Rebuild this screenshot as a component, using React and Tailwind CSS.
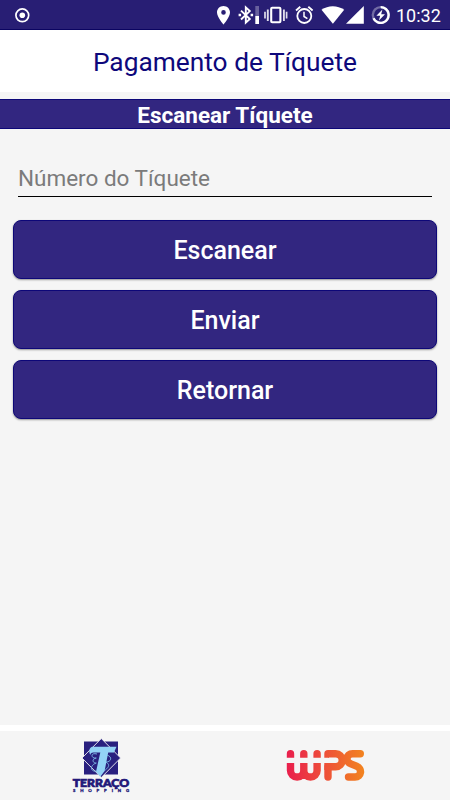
import React, { useState } from "react";

const StatusBar = () => (
  <div className="flex h-[30px] w-full items-center border-b border-[#0b0461] bg-[#281e74] text-white">
    <svg className="ml-[14px] h-4 w-4" viewBox="0 0 16 16" fill="none">
      <circle cx="8.3" cy="8.3" r="6.4" stroke="currentColor" strokeWidth="1.7" />
      <circle cx="8.3" cy="8.3" r="2.8" fill="currentColor" />
    </svg>

    <svg className="ml-auto h-[29px] w-[180px]" viewBox="210 0 180 29" fill="none">
      {/* Location */}
      <path
        d="M223.5 6c-3.6 0-6.5 2.8-6.5 6.4 0 4.6 6.5 12 6.5 12s6.5-7.4 6.5-12C230 8.8 227.1 6 223.5 6zm0 8.7a2.3 2.3 0 1 1 0-4.6 2.3 2.3 0 0 1 0 4.6z"
        fill="#fff"
      />
      {/* Bluetooth with battery level */}
      <path d="M241 10.6l8.8 8.4-4 3.7V7.4l4 3.7-8.8 8.4" stroke="#fff" strokeWidth="1.9" />
      <path d="M238.6 13.7h2.5v2.5h-2.5zM250.6 13.7h2.5v2.5h-2.5z" fill="#fff" />
      <path d="M255.3 6h3.7v10h-3.7z" fill="#fff" fillOpacity="0.3" />
      <path d="M255.3 16h3.7v8h-3.7z" fill="#fff" />
      {/* Vibrate */}
      <rect x="271.2" y="7.7" width="9.2" height="14.6" rx="1" stroke="#fff" strokeWidth="2.1" />
      <path d="M267.8 9.5v11.5M283.9 9.5v11.5" stroke="#fff" strokeOpacity="0.85" strokeWidth="1.9" />
      <path d="M265 11.8v6.7M286.6 11.8v6.7" stroke="#fff" strokeOpacity="0.85" strokeWidth="1.7" />
      {/* Alarm */}
      <circle cx="304.3" cy="16" r="7" stroke="#fff" strokeWidth="1.8" />
      <path d="M304 11.8v4.7l3.4 2.2" stroke="#fff" strokeWidth="1.5" />
      <path d="M296 10.4l4.3-3.6M312.6 10.4l-4.3-3.6" stroke="#fff" strokeWidth="1.9" />
      {/* Wifi */}
      <path d="M321.5 9.8C328 4.9 337.5 4.9 344.2 9.8L332.9 23.8z" fill="#fff" />
      {/* Signal */}
      <path d="M346 23.7L363.8 6v17.7z" fill="#fff" />
      {/* Battery */}
      <circle cx="380.7" cy="15" r="7.9" stroke="#fff" strokeOpacity="0.35" strokeWidth="2.4" />
      <path d="M380.7 7.1a7.9 7.9 0 1 1-7.2 11.1" stroke="#fff" strokeWidth="2.4" />
      <path d="M382.4 9.5l-6 6.2h3.8l-1.3 4.8 6.1-6.3h-3.8z" fill="#fff" />
    </svg>
    <span className="ml-[6px] w-[54px] pt-[2px] text-[18px] leading-none whitespace-nowrap">10:32</span>
  </div>
);

const ActionButton = ({ children, onClick }) => (
  <button
    onClick={onClick}
    className="flex h-[59px] w-full items-center justify-center rounded-[8px] border border-[#0d0778] bg-[#322680] pt-[3px] text-[25px] font-medium text-white shadow-[0_1px_2px_rgba(0,0,0,0.4)]"
  >
    {children}
  </button>
);

const TerracoLogo = () => (
  <svg className="h-[56px] w-[60px]" viewBox="0 0 60 56">
    <path d="M12 3.5h34v33h-34z" fill="#29207f" />
    <path d="M29.3 0.5L48.6 20L29.3 39.5L10 20z" fill="#29207f" stroke="#f5f5f5" strokeWidth="0.9" />
    <path
      d="M20 8.8h24.5l-2.6 5.6h-5.7l-3.6 18.6-4.3 5.800-4.300-5 4.300-19.400h-7c-2 0-2.800 1-3 2.700-1.800-3.500-1.200-7 1.700-8.300z"
      fill="#93d2f6"
    />
    <path
      d="M25 16c-7-2-6 5-1 4M24.5 20c-6 1-3 6 0 5M24 25c-7 3-5 9 0 8M35 17c6 2 4 7-1 7 5 3 2 6-2 9"
      fill="none"
      stroke="#7db9e5"
      strokeWidth="0.9"
    />
    <text
      x="0.7"
      y="49"
      textLength="56.5"
      lengthAdjust="spacingAndGlyphs"
      className="fill-[#221879] stroke-[#221879] stroke-[0.7] font-['Lato'] text-[10.5px] font-black"
    >
      TERRAÇO
    </text>
    <text
      x="1"
      y="54.3"
      textLength="56"
      className="fill-[#221879] stroke-[#221879] stroke-[0.3] font-['Lato'] text-[4.3px] font-black"
    >
      SHOPPING
    </text>
  </svg>
);

const WpsLogo = () => (
  <svg className="h-[32px] w-[80px]" viewBox="0 0 80 32" fill="none">
    <defs>
      <linearGradient id="wps" x1="0" y1="0" x2="80" y2="0" gradientUnits="userSpaceOnUse">
        <stop offset="0" stopColor="#e91e4d" />
        <stop offset="0.5" stopColor="#ee5138" />
        <stop offset="1" stopColor="#f2861e" />
      </linearGradient>
    </defs>
    {/* Top caps of the W */}
    <path
      d="M.8 8.7v-4a3.7 3.7 0 0 1 7.4 0v4zM14.1 8.7v-4a3.7 3.7 0 0 1 7.4 0v4zM27.4 8.7v-4a3.7 3.7 0 0 1 7.4 0v4z"
      fill="url(#wps)"
    />
    <g stroke="url(#wps)" strokeWidth="7.4">
      <path d="M4.5 14v7.4a6.6 6.6 0 0 0 13.3 0v-7.4M17.8 14v7.4a6.6 6.6 0 0 0 13.3 0v-7.4" />
      <path d="M42 4.7h7.7a6.5 6.5 0 0 1 0 13H42" />
      <path d="M42 17.7v10.3" strokeLinecap="round" />
      <path d="M74.3 4.7H66.5c-6.5 0-7.6 8.6-1.5 10.2l5.5 2.3c6.1 2.4 5 10.8-1.5 10.8H62.5" strokeLinecap="round" />
    </g>
    <path d="M42 1a3.7 3.7 0 0 0-3.7 3.7v4H43V1zM38.3 14H46v7h-7.7z" fill="url(#wps)" />
  </svg>
);

export default function App() {
  const [ticket, setTicket] = useState("");

  return (
    <div className="flex h-[800px] w-[450px] flex-col overflow-hidden bg-[#f5f5f5] font-['Roboto',sans-serif]">
      <StatusBar />

      <header className="flex h-[62px] items-center justify-center bg-white pt-[3px]">
        <h1 className="text-[26.3px] leading-none text-[#0e087b]">Pagamento de Tíquete</h1>
      </header>

      <h2 className="mt-[7px] flex h-[30px] items-center justify-center border-y border-[#0d0778] bg-[#322680] pt-[3px] text-[22.5px] leading-none font-bold text-white">
        Escanear Tíquete
      </h2>

      <main className="flex-1 px-[13px] pt-[31px]">
        <div className="mx-[5px] border-b border-black">
          <input
            value={ticket}
            onChange={(e) => setTicket(e.target.value)}
            placeholder="Número do Tíquete"
            className="block h-[36px] w-full bg-transparent text-[22.5px] text-black outline-none placeholder:text-[#7b7b7b]"
          />
        </div>

        <div className="mt-[23px] flex flex-col gap-[11px]">
          <ActionButton>Escanear</ActionButton>
          <ActionButton>Enviar</ActionButton>
          <ActionButton onClick={() => setTicket("")}>Retornar</ActionButton>
        </div>
      </main>

      <footer className="grid h-[75px] grid-cols-2 border-t-[6px] border-white pt-[7px]">
        <div className="flex justify-start pl-[72px]">
          <TerracoLogo />
        </div>
        <div className="flex justify-start pt-[11px] pl-[61px]">
          <WpsLogo />
        </div>
      </footer>
    </div>
  );
}
